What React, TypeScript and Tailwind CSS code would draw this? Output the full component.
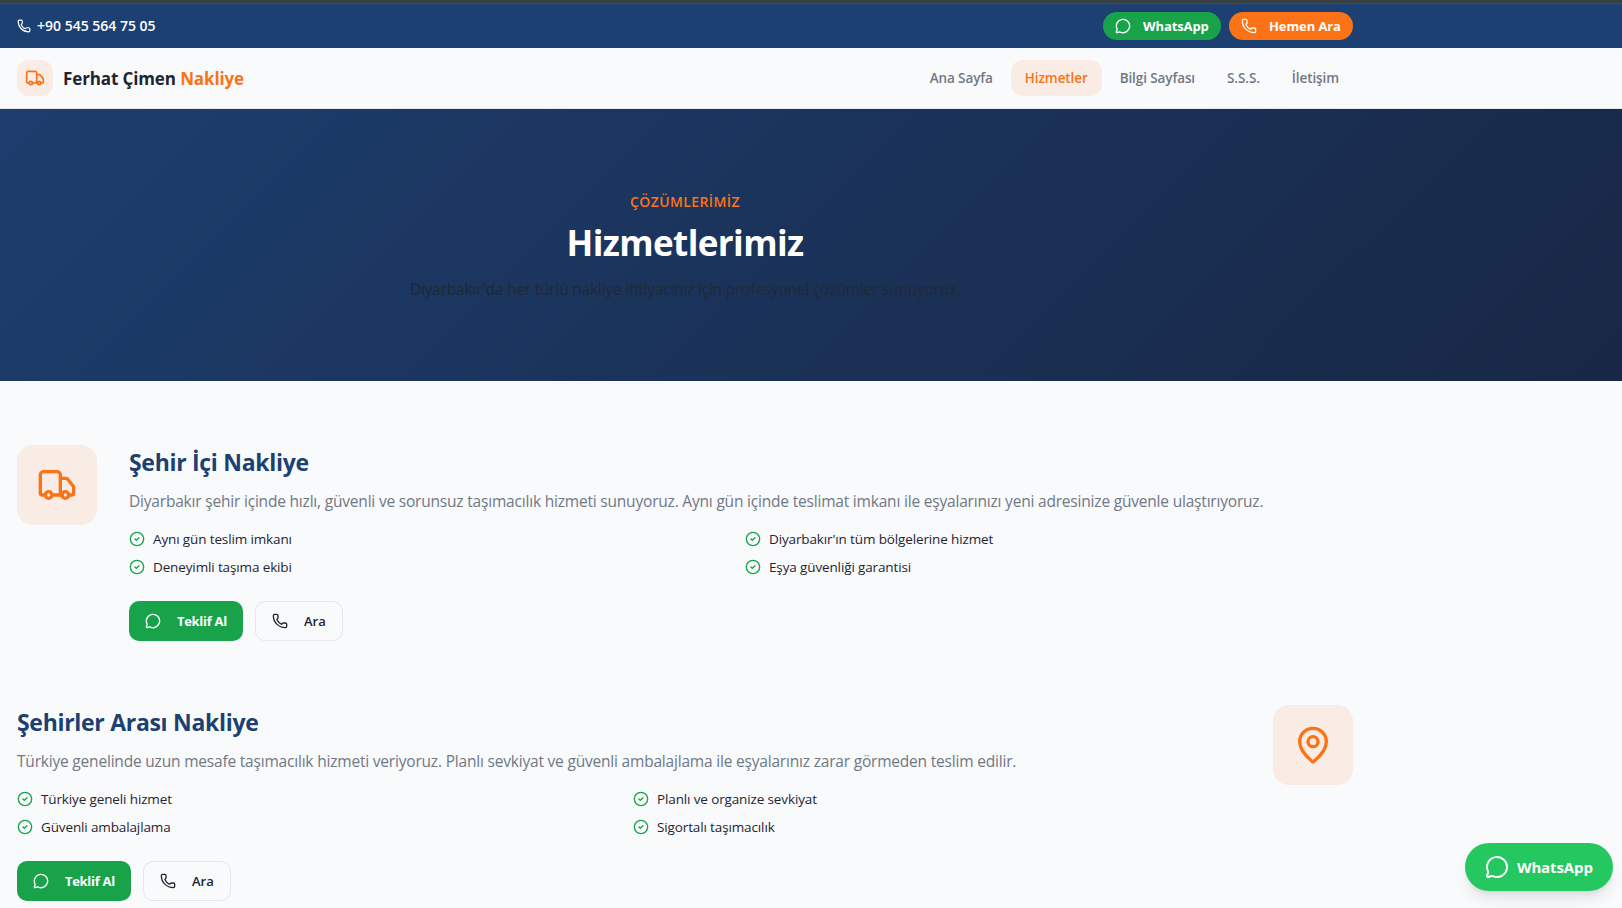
import { CircleCheck, MapPin, MessageCircle, Phone, Truck, type LucideIcon } from "lucide-react";

interface Service {
  title: string;
  description: string;
  features: string[];
  icon: LucideIcon;
  reverse?: boolean;
}

const NAV_ITEMS = ["Ana Sayfa", "Hizmetler", "Bilgi Sayfası", "S.S.S.", "İletişim"];

const SERVICES: Service[] = [
  {
    title: "Şehir İçi Nakliye",
    description:
      "Diyarbakır şehir içinde hızlı, güvenli ve sorunsuz taşımacılık hizmeti sunuyoruz. Aynı gün içinde teslimat imkanı ile eşyalarınızı yeni adresinize güvenle ulaştırıyoruz.",
    features: [
      "Aynı gün teslim imkanı",
      "Diyarbakır'ın tüm bölgelerine hizmet",
      "Deneyimli taşıma ekibi",
      "Eşya güvenliği garantisi",
    ],
    icon: Truck,
  },
  {
    title: "Şehirler Arası Nakliye",
    description:
      "Türkiye genelinde uzun mesafe taşımacılık hizmeti veriyoruz. Planlı sevkiyat ve güvenli ambalajlama ile eşyalarınız zarar görmeden teslim edilir.",
    features: [
      "Türkiye geneli hizmet",
      "Planlı ve organize sevkiyat",
      "Güvenli ambalajlama",
      "Sigortalı taşımacılık",
    ],
    icon: MapPin,
    reverse: true,
  },
];

function TopBar() {
  return (
    <div className="h-11 bg-[#1d4072]">
      <div className="flex h-full w-[1353px] items-center justify-between pl-[17px] text-white">
        <a href="#" className="flex items-center gap-1.5 text-sm font-semibold">
          <Phone className="size-3.5" />
          <span>+90 545 564 75 05</span>
        </a>
        <div className="flex gap-2 text-[13px] font-bold tracking-[-0.1px]">
          <a href="#" className="flex h-7 w-[118px] items-center gap-3 rounded-full bg-[#18a34a] pl-3">
            <MessageCircle className="size-4" />
            <span className="pt-0.5">WhatsApp</span>
          </a>
          <a href="#" className="flex h-7 w-[124px] items-center gap-3 rounded-full bg-[#fb7316] pl-3">
            <Phone className="size-4" />
            <span className="pt-0.5">Hemen Ara</span>
          </a>
        </div>
      </div>
    </div>
  );
}

function Header() {
  return (
    <header className="h-[61px] border-b border-[#e4e7eb]">
      <div className="flex h-full w-[1353px] items-center justify-between pl-[17px]">
        <a href="#" className="flex items-center gap-2.5">
          <span className="flex size-9 items-center justify-center rounded-xl bg-[#f9ece4]">
            <Truck className="size-5 text-[#fb7316]" />
          </span>
          <span className="pt-px text-[17px] font-bold tracking-[-0.12px] text-[#1f2530]">
            Ferhat Çimen <span className="text-[#fb7316]">Nakliye</span>
          </span>
        </a>
        <nav className="flex gap-1 text-[13.5px] font-semibold tracking-[-0.1px]">
          {NAV_ITEMS.map((item) => (
            <a
              key={item}
              href="#"
              className={
                item === "Hizmetler"
                  ? "flex h-9 items-center rounded-xl bg-[#f9ece4] px-3.5 pt-px text-[#fb7316]"
                  : "flex h-9 items-center px-3.5 pt-px text-[#707885]"
              }
            >
              {item}
            </a>
          ))}
        </nav>
      </div>
    </header>
  );
}

function Hero() {
  return (
    <section className="h-[272px] bg-linear-135 from-[#1c3e6e] to-[#182745] pt-[83px]">
      <div className="flex w-[1370px] flex-col items-center">
        <span className="text-sm font-semibold tracking-[0.4px] text-[#fb7316]">ÇÖZÜMLERİMİZ</span>
        <h1 className="mt-[11px] text-[35px] leading-10 font-bold tracking-[-0.6px] text-white">Hizmetlerimiz</h1>
        <p className="mt-[14px] text-[15.5px] leading-6 tracking-[-0.21px] text-[#1f2937]">
          Diyarbakır'da her türlü nakliye ihtiyacınız için profesyonel çözümler sunuyoruz.
        </p>
      </div>
    </section>
  );
}

function ServiceRow({ service }: { service: Service }) {
  const Icon = service.icon;

  return (
    <article className={service.reverse ? "flex flex-row-reverse items-start gap-8" : "flex items-start gap-8"}>
      <div className="flex size-20 shrink-0 items-center justify-center rounded-2xl bg-[#f9ece4]">
        <Icon className="size-10 text-[#fb7316]" />
      </div>
      <div className="flex-1">
        <h2 className="mb-[11px] pt-px text-[23px] leading-8 font-bold tracking-[-0.3px] text-[#1d4072]">
          {service.title}
        </h2>
        <p className="mb-4 text-[15.5px] leading-6 tracking-[-0.195px] whitespace-nowrap text-[#707885]">
          {service.description}
        </p>
        <ul className="mb-6 grid grid-cols-2 gap-2">
          {service.features.map((feature) => (
            <li
              key={feature}
              className="flex items-center gap-2 text-[13.5px] leading-5 tracking-[-0.13px] text-[#1f2530]"
            >
              <CircleCheck className="size-4 text-[#18a34a]" />
              {feature}
            </li>
          ))}
        </ul>
        <div className="flex gap-3 text-[13px]">
          <a
            href="#"
            className="flex h-10 w-[114px] items-center gap-4 rounded-[10px] bg-[#18a34a] pl-4 font-bold tracking-[-0.3px] text-white"
          >
            <MessageCircle className="size-4" />
            <span className="pt-0.5">Teklif Al</span>
          </a>
          <a
            href="#"
            className="flex h-10 w-[88px] items-center gap-4 rounded-[10px] border border-[#e4e7eb] pl-4 font-semibold text-[#1f2530]"
          >
            <Phone className="size-4" />
            <span className="pt-0.5">Ara</span>
          </a>
        </div>
      </div>
    </article>
  );
}

export default function App() {
  return (
    <div className="relative h-[908px] overflow-hidden bg-[#f9fafc] font-['Open_Sans','Noto_Sans',sans-serif]">
      <div className="h-1 border-b border-[#4a4d50] bg-[#363f40]" />
      <TopBar />
      <Header />
      <Hero />
      <section className="flex w-[1353px] flex-col gap-16 pt-16 pl-[17px]">
        {SERVICES.map((service) => (
          <ServiceRow key={service.title} service={service} />
        ))}
      </section>
      <a
        href="#"
        className="absolute right-[9px] bottom-[17px] flex h-12 w-[148px] items-center gap-2 rounded-full bg-[#25c761] pl-5 text-[15px] font-bold tracking-[-0.12px] text-white shadow-lg"
      >
        <MessageCircle className="size-6" />
        WhatsApp
      </a>
    </div>
  );
}
